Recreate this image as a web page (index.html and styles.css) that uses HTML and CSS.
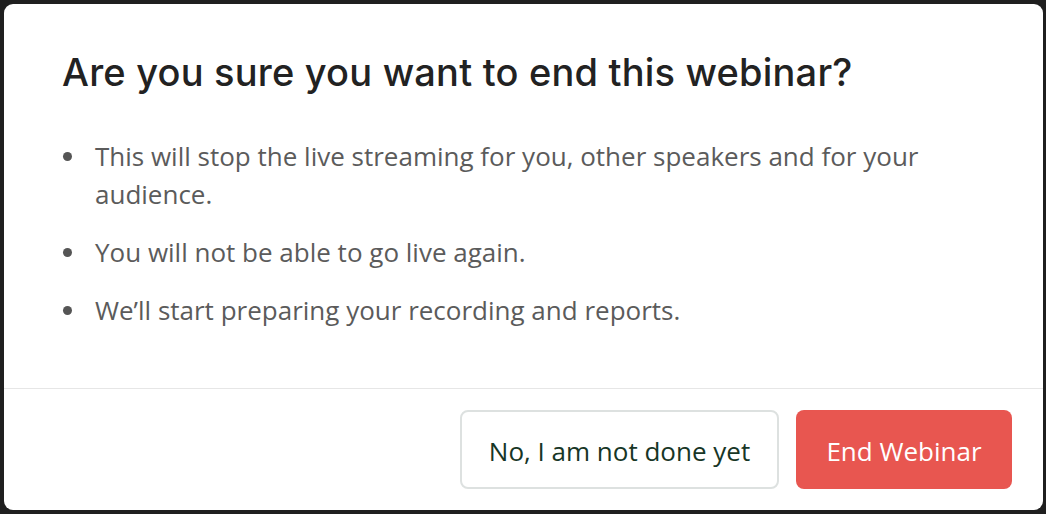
FILE: index.html
```html
<!DOCTYPE html>
<html lang="en">

<head>
    <meta charset="UTF-8" />
    <title>End webinar</title>
    <meta name="viewport" content="width=device-width, initial-scale=1" />
    <link rel="stylesheet" href="styles.css">
</head>

<body>
    <div class="modal">
        <div class="modal-body">
            <h1>Are you sure you want to end this webinar?</h1>

            <ul class="avisos">
                <li>This will stop the live streaming for you, other speakers and for your audience.</li>
                <li>You will not be able to go live again.</li>
                <li>We’ll start preparing your recording and reports.</li>
            </ul>
        </div>

        <div class="modal-footer">
            <button class="btn btn-cancelar">No, I am not done yet</button>
            <button class="btn btn-encerrar">End Webinar</button>
        </div>
    </div>
</body>

</html>
```

FILE: styles.css
```css
body,
html {
    height: 100%;
    margin: 0;
    padding: 0;
    background-color: #1f1f1f;
    font-family: "Open Sans", sans-serif;
}

body {
    padding: 4px 3px 4px 4px;
    box-sizing: border-box;
}

.modal {
    background: #fff;
    border-radius: 9px;
    height: 100%;
    display: flex;
    flex-direction: column;
    overflow: hidden;
}

.modal-body {
    flex: 1;
    padding: 45px 58px 0 58px;
}

h1 {
    font-family: Inter, sans-serif;
    font-size: 38px;
    line-height: 46px;
    font-weight: 500;
    color: #222;
    margin: 0 0 42px 0;
    letter-spacing: 0.2px;
}

.avisos {
    list-style: none;
    margin: 0;
    padding: 0;
}

.avisos li {
    position: relative;
    padding-left: 33px;
    font-size: 26px;
    line-height: 38px;
    color: #5b5b5b;
    margin-bottom: 20px;
}

.avisos li::before {
    content: "";
    position: absolute;
    left: 1px;
    top: 15px;
    width: 9px;
    height: 9px;
    border-radius: 50%;
    background: #555;
}

.modal-footer {
    border-top: 1px solid #e6e6e6;
    padding: 21px 31px 21px 0;
    display: flex;
    justify-content: flex-end;
    gap: 17px;
}

.btn {
    height: 79px;
    padding-top: 3px;
    font-family: "Open Sans", sans-serif;
    font-size: 26px;
    border-radius: 8px;
    cursor: pointer;
}

.btn-cancelar {
    width: 319px;
    background: #fff;
    border: 2px solid #dde1e0;
    color: #173626;
}

.btn-encerrar {
    width: 216px;
    background: #e85650;
    border: none;
    color: #fff;
}
```
